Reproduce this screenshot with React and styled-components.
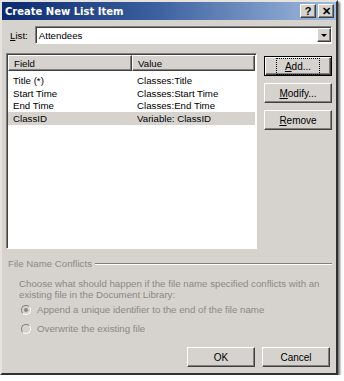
import React, { useState } from "react";
import styled, { createGlobalStyle, css } from "styled-components";

const GlobalStyle = createGlobalStyle`
  html, body {
    margin: 0;
    padding: 0;
    background: #ffffff;
  }
  body {
    font-family: "Liberation Sans", Arial, sans-serif;
    font-size: 9.7px;
    color: #000;
  }
`;

const face = "#d6d3ce";

const raised = css`
  border: 1px solid;
  border-color: #ffffff #404040 #404040 #ffffff;
  box-shadow: inset -1px -1px 0 #808080;
`;

const sunken = css`
  border: 1px solid;
  border-color: #808080 #ffffff #ffffff #808080;
  box-shadow: inset 1px 1px 0 #404040;
`;

const Window = styled.div`
  width: 334px;
  height: 371px;
  background: ${face};
  border: 2px solid;
  border-color: #e6e3de #303030 #303030 #e6e3de;
  box-shadow: 2px 2px 2px rgba(0, 0, 0, 0.55);
  display: flex;
  flex-direction: column;
`;

const TitleBar = styled.div`
  height: 18px;
  background: linear-gradient(90deg, #0c2a6e 0%, #3a5e9e 45%, #a2bcdf 100%);
  display: flex;
  align-items: center;
  padding: 0 2px 0 3px;
`;

const Title = styled.div`
  flex: 1;
  color: #fff;
  font-weight: bold;
  font-size: 10px;
  font-family: "DejaVu Sans", "Liberation Sans", sans-serif;
`;

const CaptionButton = styled.div`
  width: 14px;
  height: 12px;
  margin-left: ${(p) => (p.$gap ? "2px" : "0")};
  background: ${face};
  ${raised};
  display: flex;
  align-items: center;
  justify-content: center;
  font-weight: bold;
  font-size: 11px;
  line-height: 1;
`;

const Body = styled.div`
  flex: 1;
  display: flex;
  flex-direction: column;
  padding: 6px 4px 0 4px;
`;

const ListRow = styled.div`
  display: flex;
  align-items: center;
  height: 18px;
`;

const Label = styled.div`
  width: 29px;
  padding-left: 4px;
  box-sizing: border-box;
  u { text-decoration: underline; }
`;

const Combo = styled.div`
  width: 300px;
  height: 18px;
  box-sizing: border-box;
  background: #fff;
  ${sunken};
  display: flex;
  align-items: center;
  padding-left: 3px;
`;

const ComboText = styled.div`
  flex: 1;
`;

const DropButton = styled.div`
  width: 14px;
  height: 14px;
  box-sizing: border-box;
  background: ${face};
  ${raised};
  display: flex;
  align-items: center;
  justify-content: center;
`;

const Arrow = styled.div`
  width: 0;
  height: 0;
  border-left: 3px solid transparent;
  border-right: 3px solid transparent;
  border-top: 3px solid #000;
`;

const MainRow = styled.div`
  display: flex;
  margin-top: 9px;
  gap: 7px;
`;

const ListView = styled.div`
  width: 251px;
  height: 196px;
  box-sizing: border-box;
  background: #fff;
  ${sunken};
  padding: 1px;
`;

const HeaderRow = styled.div`
  display: flex;
  height: 16px;
`;

const HeaderCell = styled.div`
  width: ${(p) => p.$w}px;
  flex: ${(p) => (p.$grow ? 1 : "none")};
  box-sizing: border-box;
  background: ${face};
  ${raised};
  padding-left: 5px;
  display: flex;
  align-items: center;
`;

const Rows = styled.div`
  padding-top: 3px;
`;

const Row = styled.div`
  display: flex;
  height: 12.8px;
  align-items: center;
  background: ${(p) => (p.$selected ? "#d6d3ce" : "transparent")};
`;

const Cell = styled.div`
  width: ${(p) => p.$w}px;
  padding-left: 5px;
  box-sizing: border-box;
  white-space: nowrap;
`;

const ButtonColumn = styled.div`
  display: flex;
  flex-direction: column;
  gap: 7px;
  padding-top: 3px;
`;

const Button = styled.div`
  width: 68px;
  height: 20px;
  box-sizing: border-box;
  background: ${face};
  font-size: 10px;
  ${raised};
  display: flex;
  align-items: center;
  justify-content: center;
  ${(p) =>
    p.$default &&
    css`
      border-color: #000;
      box-shadow: inset 1px 1px 0 #fff, inset -1px -1px 0 #404040,
        inset -2px -2px 0 #808080;
      span {
        outline: 1px dotted #000;
        outline-offset: 2px;
        padding: 0 6px;
      }
    `}
  u { text-decoration: underline; }
`;

const Group = styled.div`
  margin-top: 9px;
  color: #8a8885;
`;

const GroupHeader = styled.div`
  display: flex;
  align-items: center;
  gap: 3px;
  padding-left: 2px;
  &::after {
    content: "";
    flex: 1;
    height: 0;
    border-top: 1px solid #808080;
    border-bottom: 1px solid #fff;
  }
`;

const Description = styled.div`
  padding: 9px 0 0 13px;
  line-height: 11px;
`;

const RadioList = styled.div`
  display: flex;
  flex-direction: column;
  gap: 8px;
  padding: 4px 0 0 15px;
`;

const RadioRow = styled.div`
  display: flex;
  align-items: center;
  gap: 6px;
`;

const RadioDot = styled.div`
  width: 10px;
  height: 10px;
  box-sizing: border-box;
  border-radius: 50%;
  border: 1px solid;
  border-color: #808080 #ffffff #ffffff #808080;
  background: ${face};
  display: flex;
  align-items: center;
  justify-content: center;
  &::after {
    content: "";
    width: 4px;
    height: 4px;
    border-radius: 50%;
    background: ${(p) => (p.$checked ? "#8a8885" : "transparent")};
  }
`;

const Footer = styled.div`
  display: flex;
  justify-content: flex-end;
  gap: 7px;
  margin-top: auto;
  padding: 0 2px 6px 0;
`;

const fields = [
  ["Title (*)", "Classes:Title"],
  ["Start Time", "Classes:Start Time"],
  ["End Time", "Classes:End Time"],
  ["ClassID", "Variable: ClassID"],
];

export default function App() {
  const [selected] = useState(3);
  return (
    <>
      <GlobalStyle />
      <Window>
        <TitleBar>
          <Title>Create New List Item</Title>
          <CaptionButton>?</CaptionButton>
          <CaptionButton $gap>✕</CaptionButton>
        </TitleBar>
        <Body>
          <ListRow>
            <Label>
              <u>L</u>ist:
            </Label>
            <Combo>
              <ComboText>Attendees</ComboText>
              <DropButton>
                <Arrow />
              </DropButton>
            </Combo>
          </ListRow>
          <MainRow>
            <ListView>
              <HeaderRow>
                <HeaderCell $w={124}>Field</HeaderCell>
                <HeaderCell $grow>Value</HeaderCell>
              </HeaderRow>
              <Rows>
                {fields.map(([f, v], i) => (
                  <Row key={f} $selected={i === selected}>
                    <Cell $w={124}>{f}</Cell>
                    <Cell $w={120}>{v}</Cell>
                  </Row>
                ))}
              </Rows>
            </ListView>
            <ButtonColumn>
              <Button $default>
                <span>
                  <u>A</u>dd...
                </span>
              </Button>
              <Button>
                <span>
                  <u>M</u>odify...
                </span>
              </Button>
              <Button>
                <span>
                  <u>R</u>emove
                </span>
              </Button>
            </ButtonColumn>
          </MainRow>
          <Group>
            <GroupHeader>File Name Conflicts</GroupHeader>
            <Description>
              Choose what should happen if the file name specified conflicts with an
              <br />
              existing file in the Document Library:
            </Description>
            <RadioList>
              <RadioRow>
                <RadioDot $checked />
                Append a unique identifier to the end of the file name
              </RadioRow>
              <RadioRow>
                <RadioDot />
                Overwrite the existing file
              </RadioRow>
            </RadioList>
          </Group>
          <Footer>
            <Button>OK</Button>
            <Button>Cancel</Button>
          </Footer>
        </Body>
      </Window>
    </>
  );
}
